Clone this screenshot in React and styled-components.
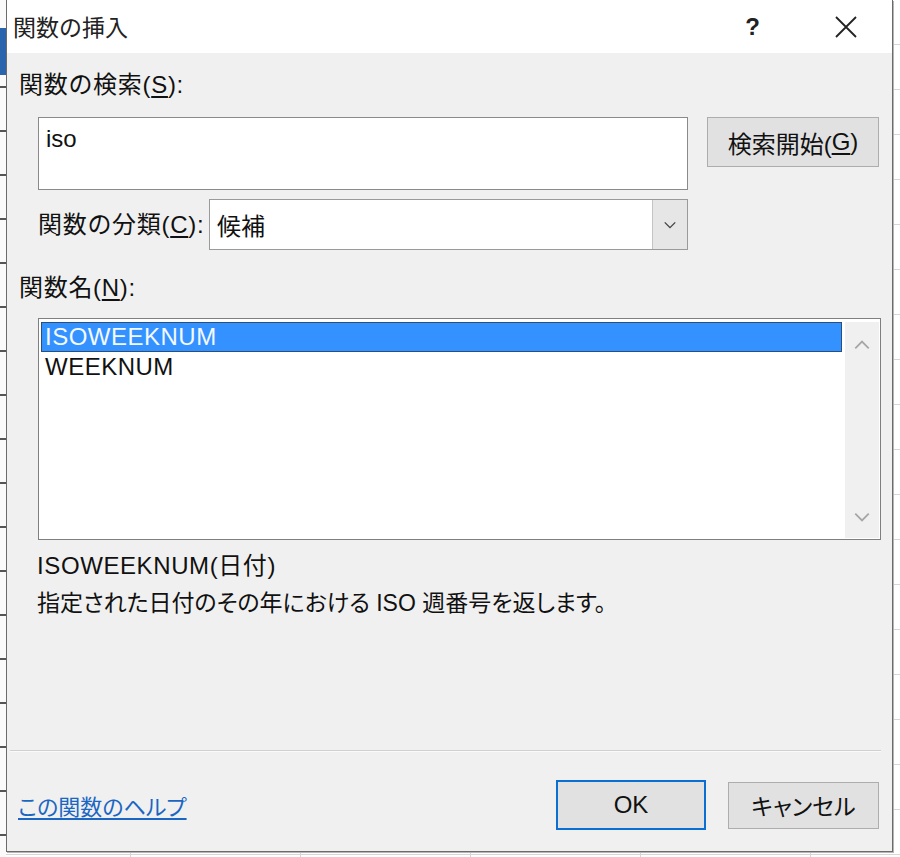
import React from "react";
import styled, { createGlobalStyle } from "styled-components";

const GlobalStyle = createGlobalStyle`
  html, body {
    margin: 0;
    padding: 0;
    background: #ffffff;
  }
  body {
    font-family: "Liberation Sans", "Noto Sans CJK JP", sans-serif;
    color: #111;
  }
`;

const Desktop = styled.div`
  width: 900px;
  height: 857px;
  display: flex;
  align-items: flex-start;
  overflow: hidden;
  background-color: #fff;
  background-image:
    repeating-linear-gradient(to bottom, transparent 0 44px, #d6d6d6 44px 45px),
    repeating-linear-gradient(to right, transparent 0 130px, #d6d6d6 130px 131px, transparent 131px 170px);
`;

const SheetEdge = styled.div`
  width: 6px;
  height: 857px;
  flex-shrink: 0;
  background:
    linear-gradient(to bottom, transparent 0 28px, #2a64ad 28px 75px, transparent 75px),
    repeating-linear-gradient(to bottom, #fafafa 0 42px, #555 42px 44px);
`;

const Window = styled.div`
  width: 885px;
  height: 851px;
  display: flex;
  flex-direction: column;
  background: #f0f0f0;
  border: 1px solid #6b6b6b;
  border-top: none;
  box-shadow: 1px 1px 0 #b5b5b5;
`;

const TitleBar = styled.div`
  height: 53px;
  display: flex;
  align-items: center;
  background: #fff;
  flex-shrink: 0;
`;

const Title = styled.div`
  flex: 1;
  padding-left: 6px;
  padding-bottom: 2px;
  font-size: 23px;
  color: #222;
`;

const CaptionButton = styled.div`
  width: 93px;
  height: 53px;
  display: flex;
  align-items: center;
  justify-content: center;
  font-size: 24px;
  font-weight: bold;
  color: #222;
`;

const Body = styled.div`
  flex: 1;
  display: flex;
  flex-direction: column;
  padding: 0 11px 21px 12px;
`;

const Label = styled.div`
  height: 30px;
  line-height: 30px;
  font-size: 24px;
  letter-spacing: 0.7px;
  margin-top: ${(p) => p.$top || 0}px;
  margin-left: ${(p) => p.$left || 0}px;
  white-space: nowrap;
  u {
    text-decoration: underline;
    text-underline-offset: 3px;
  }
`;

const SearchRow = styled.div`
  display: flex;
  align-items: flex-start;
  gap: 19px;
  margin-top: 17px;
  padding-left: 19px;
`;

const SearchBox = styled.div`
  width: 650px;
  height: 73px;
  background: #fff;
  border: 1px solid #8a8a8a;
  padding: 8px 7px;
  box-sizing: border-box;
  font-size: 24px;
  line-height: 26px;
`;

const Button = styled.div`
  width: ${(p) => p.$w}px;
  height: ${(p) => p.$h}px;
  box-sizing: border-box;
  display: flex;
  align-items: center;
  justify-content: center;
  background: #e1e1e1;
  border: ${(p) => (p.$default ? "2px solid #0a6fd1" : "1px solid #adadad")};
  font-size: ${(p) => p.$size || 24}px;
  font-feature-settings: ${(p) => (p.$narrow ? '"palt"' : "normal")};
  color: #111;
  u {
    text-decoration: underline;
    text-underline-offset: 3px;
  }
`;

const CategoryRow = styled.div`
  display: flex;
  align-items: center;
  margin-top: 9px;
  padding-left: 19px;
`;

const CategoryLabel = styled(Label)`
  width: 171px;
`;

const Select = styled.div`
  width: 479px;
  height: 51px;
  box-sizing: border-box;
  display: flex;
  background: #fff;
  border: 1px solid #9a9a9a;
`;

const SelectValue = styled.div`
  flex: 1;
  display: flex;
  align-items: center;
  padding-left: 7px;
  font-size: 24px;
`;

const SelectArrow = styled.div`
  width: 34px;
  display: flex;
  align-items: center;
  justify-content: center;
  background: #e6e6e6;
  border-left: 1px solid #c4c4c4;
`;

const ListBox = styled.div`
  width: 843px;
  height: 222px;
  box-sizing: border-box;
  margin-top: 15px;
  margin-left: 19px;
  background: #fff;
  border: 1px solid #7f7f7f;
  padding: 3px 1px 1px 2px;
  display: grid;
  grid-template-columns: 1fr 34px;
  gap: 3px;
`;

const Rows = styled.div`
  display: flex;
  flex-direction: column;
`;

const Row = styled.div`
  height: 30px;
  box-sizing: border-box;
  display: flex;
  align-items: center;
  padding-left: 3px;
  font-size: 24px;
  letter-spacing: 0.5px;
  background: ${(p) => (p.$selected ? "#3392ff" : "transparent")};
  color: ${(p) => (p.$selected ? "#f4f8ff" : "#111")};
  border: ${(p) => (p.$selected ? "1px solid #2c4f78" : "1px solid transparent")};
`;

const ScrollBar = styled.div`
  background: #f0f0f0;
  display: flex;
  flex-direction: column;
  justify-content: space-between;
  align-items: center;
  padding: 14px 0 12px;
`;

const Syntax = styled(Label)`
  margin-top: 11px;
  margin-left: 18px;
  letter-spacing: 0.6px;
`;

const Description = styled(Label)`
  margin-top: 7px;
  margin-left: 18px;
  font-size: 23px;
  letter-spacing: 0;
  font-feature-settings: "palt";
`;

const Separator = styled.div`
  margin-top: auto;
  margin-left: -9px;
  width: 871px;
  height: 1px;
  background: #d0d0d0;
  border-bottom: 1px solid #fafafa;
`;

const Footer = styled.div`
  display: flex;
  align-items: center;
  margin-top: 28px;
`;

const HelpLink = styled.a`
  flex: 1;
  margin-left: -1px;
  font-size: 22px;
  color: #1a66c2;
  text-decoration: underline;
  text-underline-offset: 3px;
  font-feature-settings: "palt";
  cursor: pointer;
`;

const FooterButtons = styled.div`
  display: flex;
  align-items: center;
  gap: 22px;
  margin-right: 2px;
`;

const Chevron = ({ up, color = "#555", size = 16 }) => (
  <svg width={size} height={size} viewBox="0 0 16 16">
    <path
      d={up ? "M2 11 L8 5 L14 11" : "M2 5 L8 11 L14 5"}
      fill="none"
      stroke={color}
      strokeWidth="1.6"
    />
  </svg>
);

const CloseIcon = () => (
  <svg width="22" height="22" viewBox="0 0 22 22">
    <path d="M1 1 L21 21 M21 1 L1 21" stroke="#222" strokeWidth="1.8" fill="none" />
  </svg>
);

export default function App() {
  return (
    <>
      <GlobalStyle />
      <Desktop>
        <SheetEdge />
        <Window>
          <TitleBar>
            <Title>関数の挿入</Title>
            <CaptionButton>?</CaptionButton>
            <CaptionButton>
              <CloseIcon />
            </CaptionButton>
          </TitleBar>
          <Body>
            <Label $top={17}>
              関数の検索(<u>S</u>):
            </Label>
            <SearchRow>
              <SearchBox>iso</SearchBox>
              <Button $w={172} $h={50}>
                検索開始(<u>G</u>)
              </Button>
            </SearchRow>
            <CategoryRow>
              <CategoryLabel>
                関数の分類(<u>C</u>):
              </CategoryLabel>
              <Select>
                <SelectValue>候補</SelectValue>
                <SelectArrow>
                  <Chevron size={14} color="#444" />
                </SelectArrow>
              </Select>
            </CategoryRow>
            <Label $top={23}>
              関数名(<u>N</u>):
            </Label>
            <ListBox>
              <Rows>
                <Row $selected>ISOWEEKNUM</Row>
                <Row>WEEKNUM</Row>
              </Rows>
              <ScrollBar>
                <Chevron up color="#a6a6a6" size={18} />
                <Chevron color="#a6a6a6" size={18} />
              </ScrollBar>
            </ListBox>
            <Syntax>ISOWEEKNUM(日付)</Syntax>
            <Description>
              指定された日付のその年における ISO 週番号を返します。
            </Description>
            <Separator />
            <Footer>
              <HelpLink>この関数のヘルプ</HelpLink>
              <FooterButtons>
                <Button $w={150} $h={50} $default>
                  OK
                </Button>
                <Button $w={151} $h={47} $size={23} $narrow>
                  キャンセル
                </Button>
              </FooterButtons>
            </Footer>
          </Body>
        </Window>
      </Desktop>
    </>
  );
}
